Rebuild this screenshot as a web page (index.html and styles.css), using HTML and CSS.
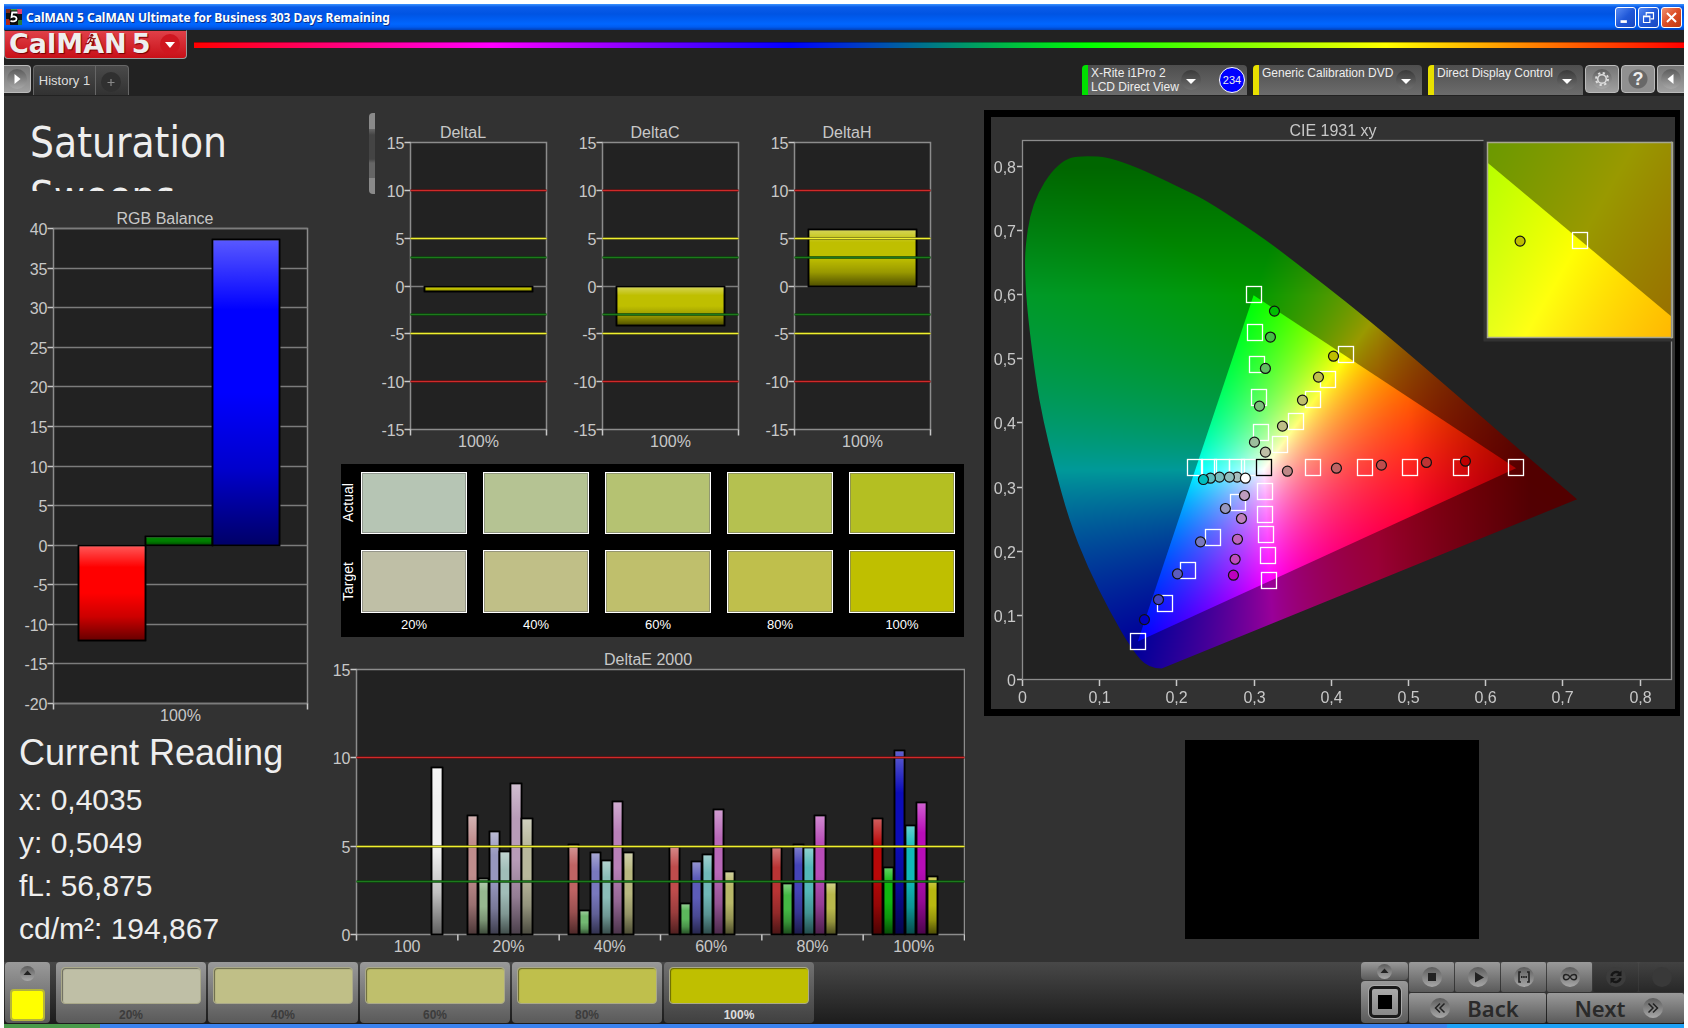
FILE: index.html
```html
<!DOCTYPE html>
<html lang="en">
<head>
<meta charset="UTF-8">
<meta name="viewport" content="width=device-width, initial-scale=1.0">
<title>CalMAN 5 CalMAN Ultimate for Business 303 Days Remaining</title>
<link rel="stylesheet" href="styles.css">
</head>
<body>

<div class="window">
    <div class="titlebar">
        <svg class="app-icon" viewBox="0 0 16 16">
            <rect width="16" height="16" fill="#111"/>
            <path d="M0 0h5v4H0z" fill="#7a2a1a"/><path d="M11 0h5v5h-5z" fill="#e04070"/><path d="M0 10h4v6H0z" fill="#b02818"/><path d="M12 11h4v5h-4z" fill="#2a7a3a"/><path d="M5 0h6v3H5z" fill="#4a9a40"/>
            <path d="M11.5 3.5H6.2L5.6 8c2-1 5-.8 5 1.8S7.500 13 4.500 11.800" fill="none" stroke="#000" stroke-width="4"/>
            <path d="M11.500 3.500H6.200L5.600 8c2-1 5-.8 5 1.800S7.500 13 4.500 11.800" fill="none" stroke="#fff" stroke-width="1.800"/>
        </svg>
        <span class="titlebar-text">CalMAN 5 CalMAN Ultimate for Business 303 Days Remaining</span>
        <button class="win-btn" aria-label="Minimize"><svg viewBox="0 0 21 21"><path d="M5 15h7" stroke="#fff" stroke-width="3"/></svg></button>
        <button class="win-btn" aria-label="Restore"><svg viewBox="0 0 21 21"><path d="M8 8V5h8v7h-3M8 5.500h8M5 9h7v7H5zM5 9.500h7" fill="none" stroke="#fff" stroke-width="1.300"/></svg></button>
        <button class="win-btn win-close" aria-label="Close"><svg viewBox="0 0 21 21"><path d="M5.500 5.500l10 10M15.500 5.500l-10 10" stroke="#fff" stroke-width="2.200"/></svg></button>
    </div>

    <div class="brand-row">
        <button class="logo" aria-label="CalMAN 5 menu">
            <span class="logo-text">CalMAN</span><span class="logo-text">5</span>
            <svg class="runner" viewBox="0 0 14 16"><circle cx="8" cy="2.500" r="1.800" fill="#8f1010"/><path d="M7.500 5L6 9l4 2-1 4M6 9l-2 3-3.500.5M3 7l3-2.500L10 7l2.500-1" fill="none" stroke="#8f1010" stroke-width="1.500"/></svg>
            <svg class="logo-arrow" viewBox="0 0 20 20"><circle cx="10" cy="10" r="10" fill="#cf1620"/><path d="M5 8h10l-5 6z" fill="#fff"/></svg>
        </button>
        <div class="rainbow"></div>
    </div>

    <div class="tab-row">
        <button class="square-btn flush-left" aria-label="Show panel"><svg viewBox="0 0 20 20"><circle cx="10" cy="10" r="10" fill="url(#knob)"/><path d="M7.500 5l6 5-6 5z" fill="#fff"/></svg></button>
        <div class="tabs">
            <button class="tab">History 1</button>
            <button class="tab tab-add" aria-label="Add tab"><svg viewBox="0 0 20 20"><circle cx="10" cy="10" r="10" fill="#303030"/><path d="M10 7v7M6.500 10.500h7" stroke="#888" stroke-width="1.200"/></svg></button>
        </div>
        <div class="devices">
            <div class="device meter">
                <button class="device-btn"><span>X-Rite i1Pro 2<br>LCD Direct View</span></button>
                <svg class="knob" viewBox="0 0 20 20"><circle cx="10" cy="10" r="10" fill="url(#knobDark)"/><path d="M5 9h10l-5 5z" fill="#fff"/></svg>
                <span class="count">234</span>
            </div>
            <div class="device source">
                <select class="device-select" aria-label="Source"><option>Generic Calibration DVD</option></select>
                <svg class="knob" viewBox="0 0 20 20"><circle cx="10" cy="10" r="10" fill="url(#knobDark)"/><path d="M5 9h10l-5 5z" fill="#fff"/></svg>
            </div>
            <div class="device display">
                <select class="device-select" aria-label="Display control"><option>Direct Display Control</option></select>
                <svg class="knob" viewBox="0 0 20 20"><circle cx="10" cy="10" r="10" fill="url(#knobDark)"/><path d="M5 9h10l-5 5z" fill="#fff"/></svg>
            </div>
        </div>
        <button class="square-btn" aria-label="Settings"><svg viewBox="0 0 20 20"><circle cx="10" cy="10" r="10" fill="url(#knob)"/><circle cx="10" cy="10" r="4.300" fill="none" stroke="#ddd" stroke-width="1.600"/><circle cx="10" cy="10" r="6" fill="none" stroke="#ddd" stroke-width="2" stroke-dasharray="2.300 2.410"/></svg></button>
        <button class="square-btn help" aria-label="Help">?</button>
        <button class="square-btn flush-right" aria-label="Hide panel"><svg viewBox="0 0 20 20"><circle cx="10" cy="10" r="10" fill="url(#knob)"/><path d="M12.500 5l-6 5 6 5z" fill="#fff"/></svg></button>
    </div>

    <main class="workspace">
        <section class="col-left">
            <h1>Saturation Sweeps</h1>
            <div class="chart" id="rgbBalance"></div>
            <div class="reading">
                <h2>Current Reading</h2>
                <p>x: 0,4035</p>
                <p>y: 0,5049</p>
                <p>fL: 56,875</p>
                <p>cd/m²: 194,867</p>
            </div>
        </section>

        <section class="col-middle">
            <div class="delta-row">
                <div class="scroll-stub"></div>
                <div class="delta-charts">
                    <div class="chart" id="deltaL"></div>
                    <div class="chart" id="deltaC"></div>
                    <div class="chart" id="deltaH"></div>
                </div>
            </div>
            <div class="swatches">
                <span class="side-label">Actual</span>
                <div class="swatch a20"></div><div class="swatch a40"></div><div class="swatch a60"></div><div class="swatch a80"></div><div class="swatch a100"></div>
                <span class="side-label">Target</span>
                <div class="swatch t20"></div><div class="swatch t40"></div><div class="swatch t60"></div><div class="swatch t80"></div><div class="swatch t100"></div>
                <span></span>
                <span class="pct">20%</span><span class="pct">40%</span><span class="pct">60%</span><span class="pct">80%</span><span class="pct">100%</span>
            </div>
            <div class="chart" id="deltaE"></div>
        </section>

        <section class="col-right">
            <div class="cie" id="cie"><canvas></canvas></div>
            <div class="pattern"></div>
        </section>
    </main>

    <footer class="footer">
        <button class="current-color" aria-label="Current color">
            <svg viewBox="0 0 15 15"><circle cx="7.500" cy="7.500" r="7.500" fill="url(#knob)"/><path d="M3.500 9h8l-4-4.500z" fill="#222"/></svg>
            <i></i>
        </button>
        <div class="levels">
            <button class="level"><i class="t20"></i>20%</button>
            <button class="level"><i class="t40"></i>40%</button>
            <button class="level"><i class="t60"></i>60%</button>
            <button class="level"><i class="t80"></i>80%</button>
            <button class="level active"><i class="t100"></i>100%</button>
        </div>
        <div class="pattern-btns">
            <button class="ctl" aria-label="Expand"><svg class="small" viewBox="0 0 15 15"><circle cx="7.500" cy="7.500" r="7.500" fill="url(#knob)"/><path d="M3.500 9h8l-4-4.500z" fill="#222"/></svg></button>
            <button class="ctl" aria-label="Pattern window"><i class="pattern-icon"></i></button>
        </div>
        <div class="transport">
            <button class="ctl" aria-label="Stop"><svg viewBox="0 0 20 20"><circle cx="10" cy="10" r="10" fill="url(#knob)"/><path d="M6 6h8v8H6z" fill="#222"/></svg></button>
            <button class="ctl" aria-label="Read"><svg viewBox="0 0 20 20"><circle cx="10" cy="10" r="10" fill="url(#knob)"/><path d="M7 5l9 5.500-9 5z" fill="#222"/></svg></button>
            <button class="ctl" aria-label="Read series"><svg viewBox="0 0 20 20"><circle cx="10" cy="10" r="10" fill="url(#knob)"/><path d="M7 5H5v10h2M13 5h2v10h-2" fill="none" stroke="#222" stroke-width="1.600"/><path d="M7 10h6" stroke="#222" stroke-width="2" stroke-dasharray="1.500 .7"/></svg></button>
            <button class="ctl" aria-label="Read continuous"><svg viewBox="0 0 20 20"><circle cx="10" cy="10" r="10" fill="url(#knob)"/><path d="M10 10c-2-3.500-6.500-3.500-6.500 0s4.500 3.500 6.500 0 6.500-3.500 6.500 0-4.500 3.500-6.500 0z" fill="none" stroke="#222" stroke-width="1.500"/></svg></button>
            <button class="ctl off" aria-label="Refresh"><svg viewBox="0 0 20 20"><circle cx="10" cy="10" r="10" fill="#3c3c3c"/><path d="M5.500 9a5 5 0 0 1 8.500-2.500M14.500 11A5 5 0 0 1 6 13.500" fill="none" stroke="#161616" stroke-width="2.400"/><path d="M15.500 3.500V9H10zM4.500 16.500V11H10z" fill="#161616"/></svg></button>
            <button class="ctl off" aria-label="Record"><svg viewBox="0 0 20 20"><circle cx="10" cy="10" r="10" fill="#393939"/></svg></button>
            <button class="ctl nav back"><svg viewBox="0 0 20 20"><circle cx="10" cy="10" r="10" fill="url(#knob)"/><path d="M10 5.500L5.500 10l4.500 4.500M14.500 5.500L10 10l4.500 4.500" fill="none" stroke="#222" stroke-width="1.500"/></svg>Back</button>
            <button class="ctl nav next">Next<svg viewBox="0 0 20 20"><circle cx="10" cy="10" r="10" fill="url(#knob)"/><path d="M5.500 5.500L10 10l-4.500 4.500M10 5.500l4.500 4.500-4.500 4.500" fill="none" stroke="#222" stroke-width="1.500"/></svg></button>
        </div>
    </footer>
    <div class="taskbar"></div>
</div>

<svg class="defs" width="0" height="0">
    <defs>
        <linearGradient id="knob" x1="0" y1="0" x2="0" y2="1"><stop offset="0" stop-color="#5c5c5c"/><stop offset="1" stop-color="#a8a8a8"/></linearGradient>
        <linearGradient id="knobDark" x1="0" y1="0" x2="0" y2="1"><stop offset="0" stop-color="#3a3a3a"/><stop offset="1" stop-color="#707070"/></linearGradient>
        <linearGradient id="shade" x1="0" y1="0" x2="0" y2="1">
            <stop offset="0" stop-color="#fff" stop-opacity=".35"/>
            <stop offset=".23" stop-color="#fff" stop-opacity="0"/>
            <stop offset=".5" stop-color="#000" stop-opacity="0"/>
            <stop offset=".75" stop-color="#000" stop-opacity=".2"/>
            <stop offset="1" stop-color="#000" stop-opacity=".6"/>
        </linearGradient>
    </defs>
</svg>

<script src="charts.js"></script>
</body>
</html>
```
FILE: styles.css
```css
* {
    box-sizing: border-box;
}

body {
    margin: 0;
    background: #fff;
    font-family: "Liberation Sans", Arial, sans-serif;
    color: #eee;
}

button, select {
    font-family: inherit;
    border: none;
    padding: 0;
    margin: 0;
    color: inherit;
    cursor: pointer;
}

h1, h2, p {
    margin: 0;
    font-weight: normal;
}

.window {
    display: flex;
    flex-direction: column;
    min-height: 100vh;
    padding: 4px 4px 0;
}

/* title bar */
.titlebar {
    display: flex;
    align-items: center;
    gap: 2px;
    height: 26px;
    padding: 0 2px;
    background: linear-gradient(#3a93ff 0, #0a5be8 3px, #0054e3 10px, #0066ff 20px, #005cf0 23px, #0040b8 26px);
}

.app-icon {
    width: 16px;
    height: 16px;
}

.titlebar-text {
    flex: 1;
    padding-left: 2px;
    font-family: "Noto Sans", sans-serif;
    font-size: 12px;
    font-weight: bold;
    color: #fff;
    text-shadow: 1px 1px 0 #0a2f8a;
}

.win-btn {
    width: 21px;
    height: 21px;
    border: 1px solid #fff;
    border-radius: 3px;
    background: linear-gradient(135deg, #5a8cf4, #2058d8 50%, #1a48c0);
}

.win-btn svg {
    display: block;
    width: 19px;
    height: 19px;
}

.win-close {
    background: linear-gradient(135deg, #f09070, #dc4c24 50%, #c03810);
}

/* logo and rainbow line */
.brand-row {
    display: flex;
    gap: 7px;
    height: 35px;
    background: #222;
}

.logo {
    position: relative;
    display: flex;
    gap: 5px;
    width: 183px;
    height: 29px;
    padding: 0 0 0 4px;
    overflow: hidden;
    border: 1px solid #999;
    border-top-color: #222;
    border-radius: 0 0 4px 4px;
    background: linear-gradient(#e04048, #c81018);
}

.logo-text {
    font-family: "DejaVu Sans", sans-serif;
    font-size: 27px;
    line-height: 25px;
    font-weight: bold;
    color: #eee;
    text-shadow: 1px 1px 1px #700;
}

.runner {
    position: absolute;
    left: 80px;
    top: 2px;
    width: 12px;
    height: 14px;
}

.logo-arrow {
    position: absolute;
    right: 6px;
    top: 3px;
    width: 20px;
    height: 20px;
}

.rainbow {
    flex: 1;
    height: 6px;
    margin-top: 12px;
    background: linear-gradient(90deg, #f00, #f0f, #00f, #0f0, #ff0, #f00);
    border-top: 1px solid rgba(0, 0, 0, 0.35);
}

/* tabs and devices */
.tab-row {
    display: flex;
    gap: 2px;
    height: 31px;
    background: #222;
}

.square-btn {
    width: 34px;
    height: 28px;
    border: 1px solid #bbb;
    border-radius: 4px;
    background: linear-gradient(#757575, #a0a0a0);
}

.square-btn svg {
    display: block;
    width: 20px;
    height: 20px;
    margin: 0 auto;
}

.flush-left {
    width: 27px;
    border-left: none;
    border-radius: 0 4px 4px 0;
}

.flush-right {
    width: 27px;
    border-right: none;
    border-radius: 4px 0 0 4px;
}

.help {
    font-size: 18px;
    font-weight: bold;
    background: radial-gradient(circle, #686868 9px, #909090 10px);
}

.tabs {
    display: flex;
    height: 30px;
    border: 1px solid #666;
    border-bottom: none;
    border-radius: 4px 4px 0 0;
    background: linear-gradient(#4a4a4a, #323232);
    overflow: hidden;
}

.tab {
    width: 61px;
    font-size: 13px;
    background: none;
    color: #ddd;
}

.tab-add {
    width: 33px;
    border-left: 1px solid #666;
}

.tab-add svg {
    width: 20px;
    height: 20px;
    margin: 3px auto 0 5px;
    display: block;
}

.devices {
    display: flex;
    gap: 6px;
    margin-left: auto;
}

.device {
    position: relative;
    display: flex;
    align-items: center;
    height: 30px;
    padding-right: 6px;
    border-left: 6px solid #e8e000;
    border-radius: 4px 4px 0 0;
    background: linear-gradient(#4e4e4e, #6c6c6c);
    font-size: 12px;
    line-height: 14px;
}

.meter {
    width: 165px;
    border-left-color: #00e000;
    padding-right: 2px;
}

.source {
    width: 169px;
}

.display {
    width: 155px;
}

.device-btn, .device-select {
    flex: 1;
    height: 30px;
    padding-left: 3px;
    background: none;
    font-size: 12px;
    line-height: 14px;
    text-align: left;
    white-space: nowrap;
}

.device-select {
    appearance: none;
    width: 100%;
    padding-bottom: 14px;
}

.device .knob {
    flex: none;
    width: 20px;
    height: 20px;
}

.source .knob, .display .knob {
    position: absolute;
    right: 6px;
    top: 5px;
}

.count {
    width: 26px;
    height: 26px;
    margin-left: 16px;
    border: 1px solid #fff;
    border-radius: 50%;
    background: #00f;
    font-size: 11px;
    line-height: 24px;
    text-align: center;
}

.meter .knob {
    margin-right: 2px;
    box-shadow: none;
}

/* workspace */
.workspace {
    flex: 1;
    display: grid;
    grid-template-columns: 329fr 651fr 700fr;
    background: #323232;
}

.col-left {
    padding: 20px 21px 0 16px;
}

h1 {
    height: 75px;
    padding-left: 10px;
    overflow: hidden;
    font-family: "DejaVu Sans Condensed", "DejaVu Sans", sans-serif;
    font-size: 42px;
    line-height: 54px;
}

.chart text, .cie text {
    font-size: 16px;
    fill: #c8c8c8;
}

.chart svg, .cie svg {
    display: block;
}

#rgbBalance {
    height: 520px;
    margin-top: 14px;
}

.reading {
    margin: 6px 0 0 -1px;
    font-size: 30px;
    line-height: 43px;
}

.reading h2 {
    margin-bottom: 3px;
    font-size: 36px;
    line-height: 44px;
}

.delta-row {
    display: flex;
    gap: 2px;
    padding: 17px 49px 0 36px;
}

.scroll-stub {
    width: 6px;
    height: 81px;
    border-radius: 4px 0 0 4px;
    background: linear-gradient(#8a8a8a 16px, #666 16px, #444 22px, #444 46px, #666 50px, #666 65px, #8a8a8a 65px);
}

.delta-charts {
    flex: 1;
    display: grid;
    grid-template-columns: repeat(3, 1fr);
    gap: 18px;
    margin-top: 6px;
}

.delta-charts .chart {
    height: 336px;
}

.swatches {
    display: grid;
    grid-template-columns: 12px repeat(5, 1fr);
    grid-template-rows: 62px 63px 14px;
    row-gap: 16px;
    height: 173px;
    margin: 9px 20px 0 8px;
    padding: 8px 1px 0 0;
    background: #000;
}

.side-label {
    width: 14px;
    writing-mode: vertical-rl;
    transform: rotate(180deg);
    font-size: 14px;
    line-height: 14px;
    text-align: center;
    color: #fff;
}

.swatch {
    margin: 0 8px;
    border: 1px solid #fff;
    box-shadow: inset 0 0 0 1px rgba(110, 110, 110, 0.5);
}

.pct {
    margin-top: -11px;
    font-size: 13px;
    line-height: 14px;
    text-align: center;
    color: #fff;
}

.a20 { background: #b6c5b4; }
.a40 { background: #b5c393; }
.a60 { background: #b5c272; }
.a80 { background: #b5c150; }
.a100 { background: #b4bf22; }
.t20 { background: #bfbfa6; }
.t40 { background: #c0bf87; }
.t60 { background: #bfbf6c; }
.t80 { background: #bfbf4c; }
.t100 { background: #bfbf00; }

#deltaE {
    height: 318px;
    margin: 7px 19px 0 0;
}

.col-right {
    padding-right: 4px;
}

.cie {
    position: relative;
    height: 606px;
    margin-top: 14px;
    border: 7px solid #000;
    border-right-width: 5px;
}

.cie canvas {
    position: absolute;
    left: 0;
    top: 0;
}

.cie svg {
    position: relative;
}

.pattern {
    width: 294px;
    height: 199px;
    margin: 24px auto 0;
    background: #000;
}

/* bottom bar */
.footer {
    display: flex;
    height: 62px;
    padding-left: 1px;
    background: linear-gradient(#484848, #1c1c1c);
}

.footer button {
    border-radius: 4px;
    background: linear-gradient(#9a9a9a, #5a5a5a);
}

.footer svg {
    display: block;
    width: 20px;
    height: 20px;
}

.footer i {
    display: block;
}

.current-color {
    width: 45px;
    height: 61px;
    padding: 2px 5px 0;
}

.current-color svg, .footer svg.small {
    width: 15px;
    height: 15px;
    margin: 0 auto;
}

.current-color i {
    height: 32px;
    margin-top: 8px;
    border: 2px solid #b4b43c;
    border-radius: 4px;
    background: #ff0;
}

.levels {
    display: flex;
    gap: 2px;
    margin-left: 6px;
}

.footer .level {
    width: 150px;
    height: 61px;
    padding: 4px 5px 0;
    font-size: 12px;
    line-height: 14px;
    font-weight: bold;
    color: #3c3c3c;
}

.level i {
    height: 37px;
    margin-bottom: 4px;
    border: 1px solid #aaa98a;
    border-radius: 4px;
    box-shadow: inset 1px 1px 1px rgba(0, 0, 0, 0.45);
}

.footer .level.active {
    background: linear-gradient(#727272, #404040);
    color: #ddd;
}

.pattern-btns {
    display: grid;
    grid-template-rows: 18px 42px;
    gap: 1px;
    width: 47px;
    margin-left: auto;
    margin-right: 1px;
}

.pattern-icon {
    width: 32px;
    height: 32px;
    margin: 0 auto;
    border: 3px solid #1a1a1a;
    border-radius: 5px;
    outline: 1px solid #aaa;
    background: linear-gradient(#000, #000) center / 14px 14px no-repeat, linear-gradient(#aaa, #888);
}

.transport {
    display: grid;
    grid-template-columns: repeat(6, 45px);
    grid-template-rows: 30px 30px;
    gap: 1px;
}

.transport svg {
    margin: 0 auto;
}

.transport .ctl {
    border-radius: 2px;
}

.footer .off {
    background: linear-gradient(#424242, #282828);
}

.footer .nav {
    grid-column: span 3;
    display: flex;
    align-items: center;
    justify-content: center;
    gap: 17px;
    font-family: "Noto Sans", sans-serif;
    font-size: 22px;
    line-height: 24px;
    font-weight: 600;
    color: #2a2a2a;
}

.footer .back {
    padding-right: 6px;
}

.footer .next {
    padding-left: 6px;
}

.nav svg {
    margin: 0;
}

.taskbar {
    height: 4px;
    background: linear-gradient(90deg, #4a9a4a 96px, #3b82ee 96px, #3b82ee 1443px, #1ea0f5 1443px);
}

.defs {
    position: absolute;
}
```
FILE: charts.js
```javascript
var NS = 'http://www.w3.org/2000/svg';

function add(parent, name, attrs, text) {
    var node = document.createElementNS(NS, name);
    for (var key in attrs) {
        node.setAttribute(key, attrs[key]);
    }
    if (text !== undefined) {
        node.textContent = text;
    }
    parent.appendChild(node);
    return node;
}

function line(svg, x1, y1, x2, y2, color, width) {
    add(svg, 'line', { x1: x1, y1: y1, x2: x2, y2: y2, stroke: color, 'stroke-width': width || 1 });
}

function label(svg, x, y, text, anchor) {
    add(svg, 'text', { x: x, y: y, 'text-anchor': anchor || 'middle' }, text);
}

// Bar chart with limits; each group is a list of [slot start, slot end, value, color], slots from 0 to 1
function barChart(id, o) {
    var el = document.getElementById(id);
    var w = el.clientWidth, h = el.clientHeight;
    var svg = add(el, 'svg', { width: w, height: h });
    var left = o.left + 0.5, right = w - o.right - 0.5, top = o.top + 0.5, bottom = h - o.bottom - 0.5;
    var y = function (v) {
        return Math.floor(top + (o.max - v) / (o.max - o.min) * (bottom - top)) + 0.5;
    };

    add(svg, 'rect', { x: left, y: top, width: right - left, height: bottom - top, fill: '#222', stroke: '#8c8c8c', 'stroke-width': 1.5 });
    for (var v = o.min; v <= o.max; v += 5) {
        line(svg, left - 6, y(v), left, y(v), '#c8c8c8', 1.5);
        label(svg, left - 6, y(v) + 6, v, 'end');
        if (o.grid || (v === 0 && o.min < 0)) {
            line(svg, left, y(v), right, y(v), '#7c7c7c', 1.3);
        }
    }

    var gw = (right - left) / o.groups.length;
    o.groups.forEach(function (group, i) {
        var gx = left + i * gw;
        line(svg, gx, bottom, gx, bottom + 6, '#c8c8c8', 1.5);
        label(svg, gx + gw / 2, bottom + 17, group.name);
        group.bars.forEach(function (b) {
            var x1 = Math.round(gx + b[0] * gw) + 0.5, x2 = Math.round(gx + b[1] * gw) + 0.5;
            var y1 = y(Math.max(b[2], 0)), y2 = y(Math.min(b[2], 0));
            var box = { x: x1, y: y1, width: x2 - x1, height: y2 - y1, fill: b[3], stroke: '#000', 'stroke-width': 1.5 };
            add(svg, 'rect', box);
            box.fill = 'url(#shade)';
            add(svg, 'rect', box);
        });
    });
    line(svg, right, bottom, right, bottom + 6, '#c8c8c8', 1.5);

    (o.limits || []).forEach(function (l) {
        line(svg, left, y(l[0]), right, y(l[0]), l[1], 2.5);
        line(svg, left, y(l[0]), right, y(l[0]), l[2], 1);
    });
    label(svg, w / 2 - 1, top - 5, o.title);
}

var RED = ['#6a1414', '#d02a2a'], YELLOW = ['#77771a', '#f0f030'], GREEN = ['#0c4a0c', '#1c7a1c'];
function limits(values) {
    return values.map(function (v) {
        var c = Math.abs(v) === 10 ? RED : Math.abs(v) === 5 ? YELLOW : GREEN;
        return [v, c[0], c[1]];
    });
}

barChart('rgbBalance', {
    title: 'RGB Balance', min: -20, max: 40, grid: true, left: 33, right: 4, top: 23, bottom: 21,
    groups: [{ name: '100%', bars: [[0.096, 0.36, -12.1, '#f00'], [0.36, 0.624, 1.1, '#007f00'], [0.624, 0.886, 38.6, '#00f']] }]
});

[['deltaL', 'DeltaL', -0.6], ['deltaC', 'DeltaC', -4.1], ['deltaH', 'DeltaH', 5.9]].forEach(function (d) {
    barChart(d[0], {
        title: d[1], min: -15, max: 15, left: 33, right: 4, top: 23, bottom: 25,
        groups: [{ name: '100%', bars: [[0.1, 0.895, d[2], '#bfbf00']] }],
        limits: limits([10, 5, 3, -3, -5, -10])
    });
});

var sweeps = {
    '20%': [[6.74, '#bf8c8c'], [3.16, '#97b790'], [5.83, '#9696bd'], [4.7, '#a0bdb8'], [8.55, '#b89cb8'], [6.57, '#b8b89c']],
    '40%': [[5.1, '#bf6464'], [1.36, '#72b872'], [4.63, '#7878bd'], [4.2, '#8abdb8'], [7.53, '#b880b8'], [4.63, '#b8b880']],
    '60%': [[5.0, '#bf4c4c'], [1.77, '#5cb85c'], [4.12, '#5c5cb8'], [4.54, '#70b8b8'], [7.08, '#b868b8'], [3.56, '#b8b868']],
    '80%': [[4.91, '#b83434'], [2.88, '#44b844'], [5.1, '#4444b8'], [4.91, '#54b8b8'], [6.74, '#b84cb8'], [2.94, '#b8b84c']],
    '100%': [[6.57, '#b80808'], [3.78, '#10b810'], [10.4, '#0c0cb8'], [6.17, '#10b8b8'], [7.47, '#b80cb8'], [3.3, '#b8b810']]
};
var groups = [{ name: '100', bars: [[0.735, 0.84, 9.43, '#f0f0f0']] }];
Object.keys(sweeps).forEach(function (name) {
    groups.push({
        name: name,
        bars: sweeps[name].map(function (s, i) {
            return [0.087 + i * 0.108, 0.187 + i * 0.108, s[0], s[1]];
        })
    });
});
barChart('deltaE', {
    title: 'DeltaE 2000', min: 0, max: 15, left: 23, right: 0, top: 25, bottom: 27,
    groups: groups, limits: limits([10, 5, 3])
});

// CIE 1931 diagram
var locus = [[0.719, 0.282], [0.181, 0.018], [0.164, 0.018], [0.143, 0.046], [0.114, 0.106], [0.085, 0.176], [0.061, 0.249],
    [0.041, 0.337], [0.0275, 0.405], [0.0175, 0.47], [0.006, 0.583], [0.0035, 0.65], [0.005, 0.681], [0.01, 0.723],
    [0.0205, 0.759], [0.038, 0.793], [0.0556, 0.811], [0.07, 0.8166], [0.0994, 0.8166], [0.12, 0.812], [0.158, 0.795],
    [0.2105, 0.764], [0.237, 0.749], [0.307, 0.694], [0.348, 0.657], [0.462, 0.55], [0.658, 0.345]];
var gamut = [[0.64, 0.33], [0.3, 0.6], [0.15, 0.06]];

function clamp(v) {
    return Math.min(1, Math.max(0, v));
}

// linear light, scaled so that the strongest channel is full
function colorAt(x, y, inside) {
    y = Math.max(y, 0.001);
    var X = x / y, Z = (1 - x - y) / y;
    var r = Math.max(0, 3.2406 * X - 1.5372 - 0.4986 * Z);
    var g = Math.max(0, -0.9689 * X + 1.8758 + 0.0415 * Z);
    var b = Math.max(0, 0.0557 * X - 0.2040 + 1.0570 * Z);
    var m = Math.max(r, g, b);
    var k = inside ? 1 - 0.32 * clamp((x - 0.5) / 0.13)
        : 0.6 - 0.28 * clamp((x - 0.46) / 0.2) - 0.2 * clamp((y - 0.6) / 0.2);
    return [r / m * k * 255, g / m * k * 255, b / m * k * 255];
}

function field(x0, x1, y0, y1, w, h, inside) {
    var c = document.createElement('canvas');
    c.width = w;
    c.height = h;
    var ctx = c.getContext('2d');
    var img = ctx.createImageData(w, h);
    for (var j = 0, p = 0; j < h; j++) {
        for (var i = 0; i < w; i++, p += 4) {
            var rgb = colorAt(x0 + (x1 - x0) * i / w, y1 - (y1 - y0) * j / h, inside);
            img.data[p] = rgb[0];
            img.data[p + 1] = rgb[1];
            img.data[p + 2] = rgb[2];
            img.data[p + 3] = 255;
        }
    }
    ctx.putImageData(img, 0, 0);
    return c;
}

function paint(ctx, v) {
    var px = function (x) { return v.left + (x - v.x0) / (v.x1 - v.x0) * v.w; };
    var py = function (y) { return v.top + (v.y1 - y) / (v.y1 - v.y0) * v.h; };
    ctx.save();
    ctx.beginPath();
    ctx.rect(v.left, v.top, v.w, v.h);
    ctx.clip();

    ctx.save();
    ctx.beginPath();
    ctx.moveTo(px(locus[0][0]), py(locus[0][1]));
    ctx.lineTo(px(locus[1][0]), py(locus[1][1]));
    for (var i = 2; i < locus.length - 1; i++) {
        var a = locus[i], b = locus[i + 1];
        ctx.quadraticCurveTo(px(a[0]), py(a[1]), px((a[0] + b[0]) / 2), py((a[1] + b[1]) / 2));
    }
    ctx.lineTo(px(locus[i][0]), py(locus[i][1]));
    ctx.closePath();
    ctx.clip();
    ctx.drawImage(field(v.x0, v.x1, v.y0, v.y1, v.w, v.h, false), v.left, v.top);
    ctx.restore();

    ctx.beginPath();
    gamut.forEach(function (g) { ctx.lineTo(px(g[0]), py(g[1])); });
    ctx.closePath();
    ctx.clip();
    ctx.drawImage(field(v.x0, v.x1, v.y0, v.y1, v.w, v.h, true), v.left, v.top);
    ctx.restore();
    return { x: px, y: py };
}

var targets = [[0.3, 0.6], [0.3024, 0.5414], [0.3046, 0.4905], [0.3076, 0.439], [0.3097, 0.3844],
    [0.4198, 0.506], [0.3965, 0.4676], [0.3771, 0.4359], [0.3555, 0.4021], [0.3343, 0.3662],
    [0.2242, 0.33], [0.2424, 0.33], [0.2596, 0.33], [0.2786, 0.33], [0.2942, 0.33],
    [0.3771, 0.33], [0.4444, 0.33], [0.5032, 0.33], [0.5688, 0.33], [0.64, 0.33],
    [0.3149, 0.2934], [0.3149, 0.258], [0.3166, 0.2268], [0.3188, 0.193], [0.3201, 0.1545],
    [0.2799, 0.2767], [0.2476, 0.2221], [0.2156, 0.1707], [0.1854, 0.1192], [0.1504, 0.0594]];

var readings = [
    [0.327, 0.5752, '#00be00'], [0.3218, 0.5347, '#44be44'], [0.3153, 0.4858, '#60be60'], [0.3076, 0.427, '#7bbe7b'], [0.3011, 0.3709, '#9cbe9c'],
    [0.4035, 0.5049, '#bebe00'], [0.384, 0.4723, '#bebe4c'], [0.3633, 0.4364, '#bebe6c'], [0.3374, 0.3958, '#bebe87'], [0.3153, 0.3553, '#bebea6'],
    [0.3438, 0.3256, '#be8787'], [0.4073, 0.3303, '#be6464'], [0.4656, 0.335, '#be4c4c'], [0.5239, 0.3392, '#be3434'], [0.5744, 0.3412, '#be0000'],
    [0.2787, 0.3163, '#a6bebe'], [0.2687, 0.3163, '#90bebe'], [0.2558, 0.3163, '#78bebe'], [0.2441, 0.3147, '#5cbebe'], [0.235, 0.3126, '#00bebe'], [0.2894, 0.3147, '#fff'],
    [0.2635, 0.2674, '#9696be'], [0.2312, 0.2154, '#7878be'], [0.2014, 0.1655, '#5c5cbe'], [0.1768, 0.1254, '#4444be'], [0.1586, 0.0942, '#0000be'],
    [0.2882, 0.2877, '#be9cbe'], [0.2843, 0.2518, '#be80be'], [0.2791, 0.2195, '#be64be'], [0.2761, 0.1883, '#be4cbe'], [0.2739, 0.1634, '#be00be']];

function square(svg, x, y, color) {
    add(svg, 'rect', { x: Math.round(x) - 7.5, y: Math.round(y) - 8.5, width: 15, height: 16, fill: 'none', stroke: color, 'stroke-width': 1.3 });
}

function dot(svg, x, y, fill) {
    add(svg, 'circle', { cx: x, cy: y, r: 5, fill: fill, stroke: '#111', 'stroke-width': 1.2 });
}

function drawCie() {
    var el = document.getElementById('cie');
    var w = el.clientWidth, h = el.clientHeight;
    var canvas = el.querySelector('canvas');
    canvas.width = w;
    canvas.height = h;
    var ctx = canvas.getContext('2d');
    var svg = add(el, 'svg', { width: w, height: h });
    var left = 31, right = w - 3, top = 23, bottom = h - 29;

    ctx.fillStyle = '#222';
    ctx.fillRect(left, top, right - left, bottom - top);
    var p = paint(ctx, { left: left, top: top, w: right - left, h: bottom - top, x0: 0, x1: 0.842, y0: 0, y1: 0.842 });
    add(svg, 'rect', { x: left + 0.5, y: top + 0.5, width: right - left - 1, height: bottom - top - 1, fill: 'none', stroke: '#8c8c8c', 'stroke-width': 1.3 });

    for (var i = 0; i <= 8; i++) {
        var text = i ? '0,' + i : '0';
        var x = Math.round(p.x(i / 10)) + 0.5, y = Math.round(p.y(i / 10)) - 0.5;
        line(svg, x, bottom, x, bottom + 6, '#c8c8c8', 1.5);
        label(svg, x, bottom + 23, text);
        line(svg, left - 5, y, left, y, '#c8c8c8', 1.5);
        label(svg, left - 6, y + 6, text, 'end');
    }
    label(svg, w / 2, top - 4, 'CIE 1931 xy');

    targets.forEach(function (t) { square(svg, p.x(t[0]), p.y(t[1]), '#fff'); });
    square(svg, p.x(0.3136), p.y(0.33), '#000');
    readings.forEach(function (r) { dot(svg, p.x(r[0]), p.y(r[1]), r[2]); });

    // magnified view around the current target
    var size = 185, ix = w - size - 3, iy = 25, span = 0.0246;
    ctx.fillStyle = '#323232';
    ctx.fillRect(ix - 3, iy - 2, size + 6, 201);
    add(svg, 'path', { d: 'M' + (ix - 2) + ' ' + top + 'H' + (w - 1) + 'V' + (iy + 198) + 'H' + (ix - 2) + 'z', fill: 'none', stroke: '#323232', 'stroke-width': 3 });
    var z = paint(ctx, { left: ix, top: iy, w: size, h: 195, x0: 0.4193 - span, x1: 0.4193 + span, y0: 0.5053 - span, y1: 0.5053 + span });
    add(svg, 'rect', { x: ix + 0.5, y: iy + 0.5, width: size, height: 195, fill: 'none', stroke: '#a8a890', 'stroke-width': 1.5 });
    square(svg, z.x(0.4193), z.y(0.5048), '#fff');
    dot(svg, z.x(0.4035), z.y(0.5049), '#bebe00');
}

drawCie();
```
